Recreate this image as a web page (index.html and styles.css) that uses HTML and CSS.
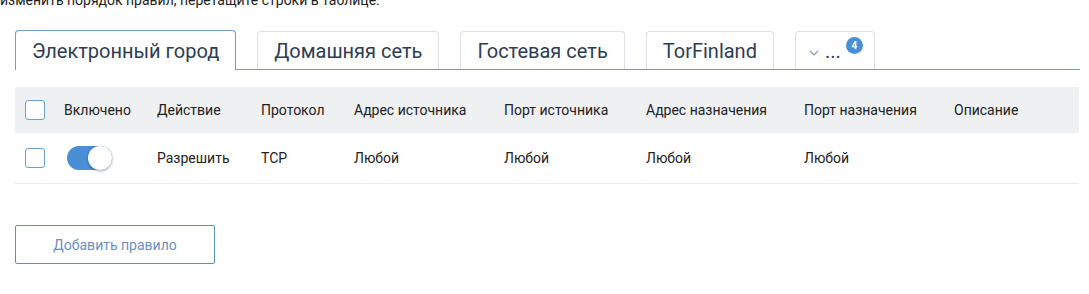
FILE: index.html
```html
<!DOCTYPE html>
<html lang="ru">
<head>
  <meta charset="UTF-8">
  <title>Правила межсетевого экрана</title>
  <link rel="stylesheet" href="styles.css">
</head>
<body>

  <p class="hint">изменить порядок правил, перетащите строки в таблице.</p>

  <div class="page">
    <div class="tabs">
      <div class="tab active">Электронный город</div>
      <div class="tab">Домашняя сеть</div>
      <div class="tab">Гостевая сеть</div>
      <div class="tab">TorFinland</div>
      <div class="tab more">
        <svg class="chevron" width="10" height="6" viewBox="0 0 10 6"><path d="M1 1l4 4 4-4" fill="none" stroke="#8a9bb0" stroke-width="1.2"/></svg>
        <span>...</span>
        <span class="badge">4</span>
      </div>
    </div>

    <table class="rules">
      <colgroup>
        <col style="width:39px">
        <col style="width:93px">
        <col style="width:104px">
        <col style="width:93px">
        <col style="width:150px">
        <col style="width:142px">
        <col style="width:158px">
        <col style="width:150px">
        <col>
      </colgroup>
      <thead>
        <tr>
          <th><span class="check"></span></th>
          <th>Включено</th>
          <th>Действие</th>
          <th>Протокол</th>
          <th>Адрес источника</th>
          <th>Порт источника</th>
          <th>Адрес назначения</th>
          <th>Порт назначения</th>
          <th>Описание</th>
        </tr>
      </thead>
      <tbody>
        <tr>
          <td><span class="check"></span></td>
          <td><span class="toggle on"><span class="knob"></span></span></td>
          <td>Разрешить</td>
          <td>TCP</td>
          <td>Любой</td>
          <td>Любой</td>
          <td>Любой</td>
          <td>Любой</td>
          <td></td>
        </tr>
      </tbody>
    </table>

    <button class="add">Добавить правило</button>
  </div>

</body>
</html>
```

FILE: styles.css
```css
body {
  margin: 0;
  font-family: Roboto, "Liberation Sans", sans-serif;
  color: #222;
  background: #fff;
}

.hint {
  margin: -9px 0 0 0;
  font-size: 14px;
  line-height: 18px;
  color: #222;
}

.page {
  padding: 21px 9px 0 15px;
}

.tabs {
  display: flex;
  align-items: flex-end;
  gap: 21px;
  border-bottom: 1px solid #6c9fc9;
  height: 39px;
}

.tab {
  height: 38px;
  box-sizing: border-box;
  padding: 0 16px;
  display: flex;
  align-items: center;
  font-size: 20px;
  color: #2e3d52;
  border: 1px solid #dcdfe3;
  border-bottom: none;
  border-radius: 4px 4px 0 0;
  position: relative;
}

.tab.active {
  height: 40px;
  margin-bottom: -1px;
  border-color: #6c9fc9;
  background: #fff;
}

.tab.more {
  padding: 0 33px 0 13px;
  gap: 6px;
}

.chevron {
  margin-top: 4px;
}

.badge {
  position: absolute;
  right: 11px;
  top: 5px;
  width: 17px;
  height: 17px;
  border-radius: 50%;
  background: #4a8fd6;
  color: #fff;
  font-size: 10px;
  font-weight: bold;
  display: flex;
  align-items: center;
  justify-content: center;
}

.rules {
  width: 1064px;
  margin-top: 17px;
  border-collapse: collapse;
  table-layout: fixed;
  font-size: 14px;
}

th, td {
  text-align: left;
  padding: 0 0 0 10px;
  white-space: nowrap;
  vertical-align: middle;
}

th {
  height: 46px;
  background: #eef0f2;
  font-weight: normal;
  color: #222;
}

td {
  height: 50px;
  border-bottom: 1px solid #e9ebee;
}

.check {
  display: block;
  width: 18px;
  height: 18px;
  border: 1.5px solid #6c9fd4;
  border-radius: 3px;
  background: #fff;
}

.toggle {
  display: block;
  width: 45px;
  height: 24px;
  border-radius: 12px;
  background: #4a8fd6;
  position: relative;
  margin-left: 3px;
}

.knob {
  position: absolute;
  right: 0;
  top: 0;
  width: 24px;
  height: 24px;
  border-radius: 50%;
  background: #fff;
  box-shadow: 0 1px 3px rgba(0, 0, 0, 0.35);
}

.add {
  margin-top: 41px;
  width: 200px;
  height: 39px;
  background: #fff;
  border: 1px solid #5b8fc7;
  border-radius: 2px;
  font-family: Roboto, "Liberation Sans", sans-serif;
  font-size: 14px;
  color: #6b8fc2;
  cursor: pointer;
}
```
